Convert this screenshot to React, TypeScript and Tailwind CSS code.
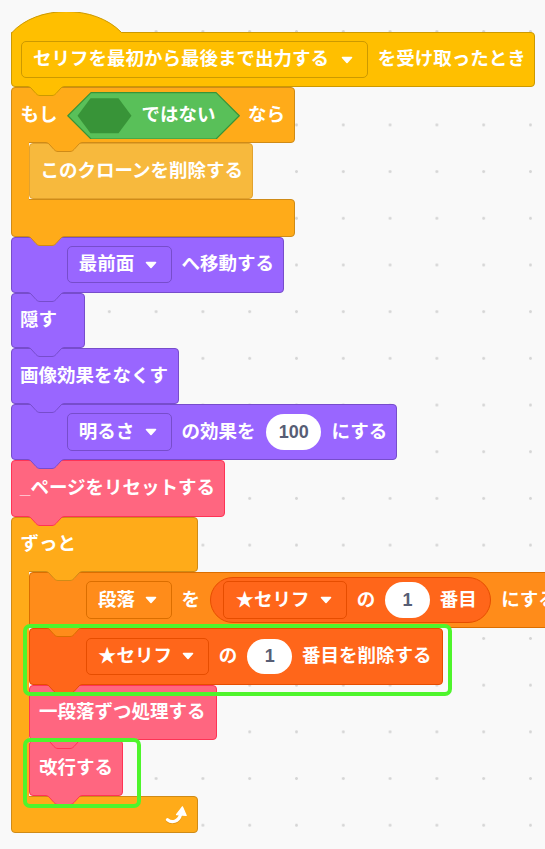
import clsx from "clsx";
import type { ReactNode } from "react";

type Pal = { bg: string; bd: string; fill: string; line: string };

const events: Pal = { bg: "bg-[#ffbf00]", bd: "border-[#cc9900]", fill: "#ffbf00", line: "#cc9900" };
const control: Pal = { bg: "bg-[#ffab19]", bd: "border-[#cf8b17]", fill: "#ffab19", line: "#cf8b17" };
const clone: Pal = { bg: "bg-[#f7b93d]", bd: "border-[#e2a22e]", fill: "#f7b93d", line: "#e2a22e" };
const looks: Pal = { bg: "bg-[#9966ff]", bd: "border-[#774dcb]", fill: "#9966ff", line: "#774dcb" };
const custom: Pal = { bg: "bg-[#ff6680]", bd: "border-[#ff3355]", fill: "#ff6680", line: "#ff3355" };
const vars: Pal = { bg: "bg-[#ff8c1a]", bd: "border-[#db6e00]", fill: "#ff8c1a", line: "#db6e00" };
const lists: Pal = { bg: "bg-[#ff661a]", bd: "border-[#e64d00]", fill: "#ff661a", line: "#e64d00" };

// bottom tab that drops into the next block's notch
function Tab({ pal, className }: { pal: Pal; className?: string }) {
  const curve = "C2 0.5 3 1 4 2 L9 7.5 C10 8.5 11 9.5 13 9.5 H25 C27 9.5 28 8.5 29 7.5 L34 2 C35 1 36 0.5 38 0.5";
  return (
    <svg width="38" height="10" viewBox="0 0 38 10" className={clsx("absolute top-full z-10 block", className)}>
      <path d={`M0 0 L0 0.5 ${curve} L38 0 Z`} fill={pal.fill} />
      <path d={`M0 0.5 ${curve}`} fill="none" stroke={pal.line} strokeWidth="1" />
    </svg>
  );
}

function Block({
  pal,
  className,
  tab = true,
  tabClass = "left-[15px]",
  children,
}: {
  pal: Pal;
  className?: string;
  tab?: boolean;
  tabClass?: string;
  children?: ReactNode;
}) {
  return (
    <div className={clsx("relative flex shrink-0 items-center whitespace-nowrap rounded-[4px] border", pal.bg, pal.bd, className)}>
      {children}
      {tab && <Tab pal={pal} className={tabClass} />}
    </div>
  );
}

function Caret() {
  return (
    <svg width="12" height="8" viewBox="0 0 12 8" className="ml-auto block shrink-0">
      <path d="M1.5 1.5 H10.5 L6 6.5 Z" fill="white" stroke="white" strokeWidth="1.6" strokeLinejoin="round" />
    </svg>
  );
}

function Dropdown({ pal, className, children }: { pal: Pal; className?: string; children: ReactNode }) {
  return (
    <div className={clsx("flex h-[37.6px] shrink-0 items-center rounded-[5px] border pl-[11px] pr-[14px]", pal.bg, pal.bd, className)}>
      <span className="whitespace-nowrap">{children}</span>
      <Caret />
    </div>
  );
}

function Num({ className, children }: { className?: string; children: ReactNode }) {
  return (
    <div className={clsx("flex h-[35.6px] shrink-0 items-center justify-center rounded-full bg-white text-[18px] text-[#575e75]", className)}>
      {children}
    </div>
  );
}

function Arm() {
  return <div className="relative z-[1] -my-px w-[18.4px] shrink-0 border-l border-[#cf8b17] bg-[#ffab19]" />;
}

function NotBool() {
  return (
    <div className="relative ml-[9px] flex h-[47.6px] w-[173.1px] shrink-0 items-center">
      <svg className="absolute inset-0" width="173.1" height="47.6" viewBox="0 0 173.1 47.6">
        <polygon
          points="0.8,23.8 24,0.6 149.1,0.6 172.3,23.8 149.1,47 24,47"
          fill="#59c059"
          stroke="#389438"
          strokeWidth="1.2"
          strokeLinejoin="round"
        />
        <polygon points="10.5,23.8 23.5,6.3 51.5,6.3 64.5,23.8 51.5,41.3 23.5,41.3" fill="#389438" />
      </svg>
      <span className="relative pl-[74.8px]">ではない</span>
    </div>
  );
}

function LoopArrow() {
  return (
    <svg width="22" height="19" viewBox="0 0 22 19" className="block">
      <g opacity="0.35" transform="translate(0 1)">
        <path d="M2.5 14.8 C6.5 18 13.5 17.5 15.8 9" fill="none" stroke="#b8760f" strokeWidth="3.2" strokeLinecap="round" />
      </g>
      <path d="M2.5 14.8 C6.5 18 13.5 17.5 15.8 9" fill="none" stroke="white" strokeWidth="3.2" strokeLinecap="round" />
      <path d="M11.5 9.6 L17.4 1.8 L21.2 10.4 Z" fill="white" stroke="white" strokeWidth="1.2" strokeLinejoin="round" />
    </svg>
  );
}

export default function App() {
  return (
    <div className="relative h-[849px] w-[545px] overflow-hidden bg-[#f9f9f9] bg-[radial-gradient(circle,#d6d6d6_1.1px,transparent_1.7px)] bg-[size:46.8px_46.7px] bg-[position:-7.7px_8.2px] font-['Liberation_Sans','Noto_Sans_CJK_JP',sans-serif] text-[18.5px] font-bold leading-none text-white">
      <div className="flex flex-col items-start pl-[11.1px] pt-[12px]">
        {/* when I receive */}
        <div className="flex flex-col items-start">
          <svg width="111" height="22" viewBox="0 0 111 22" className="relative z-[1] -mb-[2px] block">
            <path d="M1 20.5 C26 -7.5 84 -7.5 110.5 20.5 L110.5 22 L1 22 Z" fill="#ffbf00" />
            <path d="M0.5 21 C26 -7.5 84 -7.5 110.5 20.5" fill="none" stroke="#cc9900" strokeWidth="1" />
          </svg>
          <Block pal={events} className="h-[55.3px] w-[524.2px] rounded-tl-none pl-[8.8px]">
            <Dropdown pal={events} className="w-[346.9px]">
              セリフを最初から最後まで出力する
            </Dropdown>
            <span className="ml-[10px]">を受け取ったとき</span>
          </Block>
        </div>

        {/* if not */}
        <div className="flex w-[284.4px] flex-col">
          <Block pal={control} tabClass="left-[33.4px]" className="h-[56px] w-full rounded-bl-none pl-[8.5px]">
            <span>もし</span>
            <NotBool />
            <span className="ml-[8.4px]">なら</span>
          </Block>
          <div className="flex">
            <Arm />
            <div className="flex flex-col items-start">
              <Block pal={clone} tab={false} className="h-[56px] w-[223.2px] pl-[10px]">
                このクローンを削除する
              </Block>
            </div>
          </div>
          <Block pal={control} className="h-[37.4px] w-full rounded-tl-none" />
        </div>

        <Block pal={looks} className="h-[56px] w-[272.9px] pl-[54.6px]">
          <Dropdown pal={looks} className="w-[105.3px]">
            最前面
          </Dropdown>
          <span className="ml-[9.5px]">へ移動する</span>
        </Block>
        <Block pal={looks} className="h-[55.6px] w-[74.1px] pl-[8px]">
          隠す
        </Block>
        <Block pal={looks} className="h-[55.7px] w-[167.9px] pl-[8px]">
          画像効果をなくす
        </Block>
        <Block pal={looks} className="h-[56px] w-[385.9px] pl-[54.6px]">
          <Dropdown pal={looks} className="w-[105.3px]">
            明るさ
          </Dropdown>
          <span className="ml-[9.5px]">の効果を</span>
          <Num className="ml-[10.4px] w-[55.6px]">100</Num>
          <span className="ml-[10px]">にする</span>
        </Block>
        <Block pal={custom} className="h-[56.7px] w-[214.1px] pl-[8px]">
          _ページをリセットする
        </Block>

        {/* forever */}
        <div className="flex w-[187px] flex-col">
          <Block pal={control} tabClass="left-[33.4px]" className="h-[55px] w-full rounded-bl-none pl-[8.5px]">
            ずっと
          </Block>
          <div className="flex">
            <Arm />
            <div className="flex flex-col items-start">
              <Block pal={vars} className="h-[56.3px] w-[538px] pl-[55.4px]">
                <Dropdown pal={vars} className="w-[86.2px]">
                  段落
                </Dropdown>
                <span className="ml-[9.5px]">を</span>
                <div className="ml-[9.5px] flex h-[46.6px] w-[281.6px] shrink-0 items-center rounded-full border border-[#e64d00] bg-[#ff661a] pl-[12.9px]">
                  <Dropdown pal={lists} className="w-[123.4px]">
                    ★セリフ
                  </Dropdown>
                  <span className="ml-[10px]">の</span>
                  <Num className="ml-[9.6px] w-[45px]">1</Num>
                  <span className="ml-[9.7px]">番目</span>
                </div>
                <span className="ml-[10px]">にする</span>
              </Block>
              <Block pal={lists} className="h-[57px] w-[413.7px] pl-[55.4px]">
                <Dropdown pal={lists} className="w-[123.4px]">
                  ★セリフ
                </Dropdown>
                <span className="ml-[9.5px]">の</span>
                <Num className="ml-[10.2px] w-[44.5px]">1</Num>
                <span className="ml-[10px]">番目を削除する</span>
              </Block>
              <Block pal={custom} className="h-[55px] w-[187.1px] pl-[8.5px]">
                一段落ずつ処理する
              </Block>
              <Block pal={custom} className="h-[56px] w-[93.9px] pl-[8.5px]">
                改行する
              </Block>
            </div>
          </div>
          <Block pal={control} tab={false} className="h-[37.3px] w-full justify-end rounded-tl-none pr-[10px]">
            <LoopArrow />
          </Block>
        </div>
      </div>

      {/* highlight frames */}
      <div className="absolute left-[22.6px] top-[624.3px] z-20 h-[71.4px] w-[429.3px] rounded-[7px] border-[4.5px] border-[#4ef52c]" />
      <div className="absolute left-[22.6px] top-[738.3px] z-20 h-[69.4px] w-[118.2px] rounded-[7px] border-[4.5px] border-[#4ef52c]" />
    </div>
  );
}
